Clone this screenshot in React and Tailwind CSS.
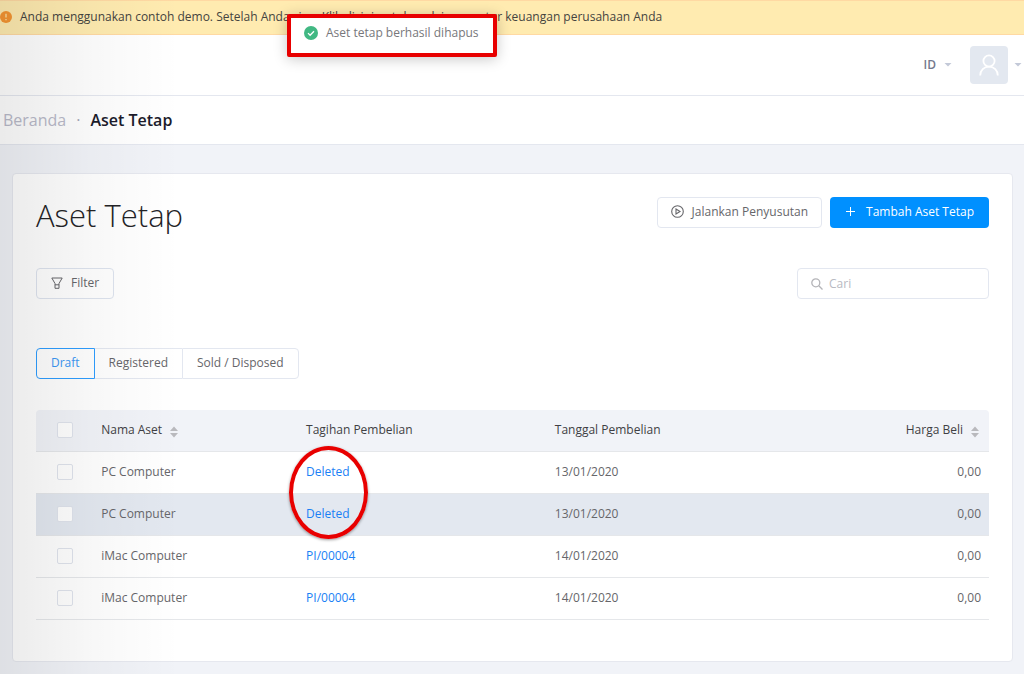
import React from 'react'

const assets = [
  { id: 1, name: 'PC Computer', bill: 'Deleted', date: '13/01/2020', price: '0,00' },
  { id: 2, name: 'PC Computer', bill: 'Deleted', date: '13/01/2020', price: '0,00', active: true },
  { id: 3, name: 'iMac Computer', bill: 'PI/00004', date: '14/01/2020', price: '0,00' },
  { id: 4, name: 'iMac Computer', bill: 'PI/00004', date: '14/01/2020', price: '0,00' },
]

const Caret = () => (
  <svg className="w-2 h-1" viewBox="0 0 8 4" fill="#c3c9d8" aria-hidden="true">
    <path d="M0.5 0h7L4 3.5z" />
  </svg>
)

const SortIcon = () => (
  <svg className="w-2 h-3 shrink-0 mt-1" viewBox="0 0 8 12" fill="#b9b9bd" aria-hidden="true">
    <path d="M4 0.5l4 4.5H0zM4 11.5L0 7h8z" />
  </svg>
)

const Checkbox = ({ label }) => (
  <input
    type="checkbox"
    aria-label={label}
    className="block mx-auto w-4 h-4 appearance-none rounded-xs border border-[#dfe3ec] bg-white checked:bg-[#0090ff]"
  />
)

const DemoBanner = () => (
  <div className="h-[35px] flex items-center gap-2 border-y border-[#ffd9a3] bg-[#ffebb0] pb-px text-[#45443f] whitespace-nowrap overflow-hidden">
    <svg className="w-3 h-3 shrink-0" viewBox="0 0 12 12" aria-hidden="true">
      <circle cx="6" cy="6" r="6" fill="#f59532" />
      <path d="M6 2.8v3.8M6 8v1.2" stroke="#ffebb0" strokeWidth="1.2" />
    </svg>
    <p>Anda menggunakan contoh demo. Setelah Anda siap, Klik disini untuk mulai mengatur keuangan perusahaan Anda</p>
  </div>
)

const Toast = () => (
  <div
    role="status"
    className="absolute top-[14px] left-[287px] w-[210px] h-[43px] flex items-start gap-2 rounded-xs border-4 border-[#e80000] bg-white pl-[13px] pt-[5px] text-[#77777b] whitespace-nowrap shadow-[0_2px_14px_rgba(0,0,0,0.22)]"
  >
    <svg className="w-[14px] h-[14px] mt-[3px] shrink-0" viewBox="0 0 14 14" aria-hidden="true">
      <circle cx="7" cy="7" r="7" fill="#41b883" />
      <path d="M4 7.1l2.1 2.1L10 5.2" fill="none" stroke="#fff" strokeWidth="1.3" />
    </svg>
    <span>Aset tetap berhasil dihapus</span>
  </div>
)

const Topbar = () => (
  <header className="h-[61px] flex items-center justify-end border-b border-[#e4e7ef] bg-white pr-[2px]">
    <button className="flex items-center gap-2 font-semibold text-[#74788d]">
      ID
      <Caret />
    </button>
    <button aria-label="Akun" className="ml-[18px] flex items-center gap-[6px]">
      <span className="w-[38px] h-[38px] flex items-center justify-center rounded-sm bg-[#e3e8f0]">
        <svg className="w-5 h-[22px]" viewBox="0 0 20 22" fill="none" stroke="#fff" strokeWidth="1.8" aria-hidden="true">
          <circle cx="10" cy="7" r="5.6" />
          <path d="M1.2 21.5c0-5 3.8-8.8 8.8-8.8s8.8 3.8 8.8 8.8" />
        </svg>
      </span>
      <Caret />
    </button>
  </header>
)

const Breadcrumb = () => (
  <nav className="h-[49px] flex items-center gap-[10px] border-b border-[#e4e7ef] bg-white pl-[3px] text-[16px]">
    <a href="#beranda" className="text-[#b9bac9]">Beranda</a>
    <span className="text-[#a5a7b8]">·</span>
    <span className="font-semibold text-[#1b1b2b]">Aset Tetap</span>
  </nav>
)

const Toolbar = () => (
  <>
    <div className="flex items-start justify-between">
      <h1 className="text-[31px] leading-[36px] font-light text-[#232326]">Aset Tetap</h1>
      <div className="flex gap-2">
        <button className="h-[31px] flex items-center gap-2 rounded-sm border border-[#e3e7f0] bg-white px-[13px] pb-[2px]">
          <svg className="w-[13px] h-[13px]" viewBox="0 0 13 13" fill="none" stroke="#66666a" strokeWidth="1.1" aria-hidden="true">
            <circle cx="6.5" cy="6.5" r="5.8" />
            <path d="M5 4l4 2.5L5 9z" />
          </svg>
          Jalankan Penyusutan
        </button>
        <button className="h-[31px] flex items-center gap-[10px] rounded-sm bg-[#0090ff] px-[15px] pb-[2px] text-white">
          <svg className="w-[11px] h-[11px]" viewBox="0 0 11 11" stroke="#fff" aria-hidden="true">
            <path d="M5.5 1v9M1 5.5h9" />
          </svg>
          Tambah Aset Tetap
        </button>
      </div>
    </div>
    <div className="mt-[35px] flex items-center justify-between">
      <button className="h-[31px] flex items-center gap-2 rounded-sm border border-[#dde3ee] bg-white px-[14px] pb-px">
        <svg className="w-3 h-3" viewBox="0 0 12 12" fill="none" stroke="#66666a" aria-hidden="true">
          <path d="M0.8 1h10.4L8 6.5v4.8H4V6.5zM4 7.8h4" />
        </svg>
        Filter
      </button>
      <label className="h-[31px] w-[192px] flex items-center gap-[6px] rounded-sm border border-[#e3e7f0] bg-white px-[13px]">
        <svg className="w-3 h-3 shrink-0" viewBox="0 0 12 12" fill="none" stroke="#b4b4b8" strokeWidth="1.3" aria-hidden="true">
          <circle cx="4.8" cy="4.8" r="4" />
          <path d="M7.8 7.8l3.7 3.7" />
        </svg>
        <input type="text" aria-label="Cari" placeholder="Cari" className="w-full min-w-0 outline-none placeholder:text-[#b8bac2]" />
      </label>
    </div>
  </>
)

const StatusTabs = () => (
  <div className="mt-[49px] flex h-[31px]">
    <button className="rounded-l-sm border border-[#2e9dff] px-[14px] pb-px text-[#3b97f5]">Draft</button>
    <button className="border-y border-[#e3e7f0] px-[14px] pb-px">Registered</button>
    <button className="rounded-r-sm border border-[#e3e7f0] px-[14px] pb-px">Sold / Disposed</button>
  </div>
)

const AssetTable = () => (
  <table className="mt-[31px] w-full table-fixed border-separate border-spacing-0 text-left">
    <colgroup>
      <col className="w-[6%]" />
      <col className="w-[21.5%]" />
      <col className="w-[26.1%]" />
      <col className="w-[24%]" />
      <col />
    </colgroup>
    <thead className="bg-[#f1f3f8] text-[#3f3f44]">
      <tr className="h-[42px]">
        <th className="rounded-tl-sm border-b border-[#e5e7ea] px-2 pb-px"><Checkbox label="Pilih semua" /></th>
        <th className="border-b border-[#e5e7ea] px-2 pb-px font-normal">
          <span className="flex items-center gap-2">Nama Aset <SortIcon /></span>
        </th>
        <th className="border-b border-[#e5e7ea] px-2 pb-px font-normal">Tagihan Pembelian</th>
        <th className="border-b border-[#e5e7ea] px-2 pb-px font-normal">Tanggal Pembelian</th>
        <th className="rounded-tr-sm border-b border-[#e5e7ea] px-2 pb-px font-normal">
          <span className="flex items-center justify-end gap-2 pr-[2px]">Harga Beli <SortIcon /></span>
        </th>
      </tr>
    </thead>
    <tbody>
      {assets.map((asset) => (
        <tr key={asset.id} className={asset.active ? 'h-[42px] bg-[#e3e8f0]' : 'h-[42px]'}>
          <td className="border-b border-[#e5e7ea] px-2 pb-px"><Checkbox label={`Pilih ${asset.name}`} /></td>
          <td className="border-b border-[#e5e7ea] px-2 pb-px">{asset.name}</td>
          <td className="border-b border-[#e5e7ea] px-2 pb-px">
            <a href="#tagihan" className="text-[#1a80f5]">{asset.bill}</a>
          </td>
          <td className="border-b border-[#e5e7ea] px-2 pb-px">{asset.date}</td>
          <td className="border-b border-[#e5e7ea] px-2 pb-px text-right">{asset.price}</td>
        </tr>
      ))}
    </tbody>
  </table>
)

const App = () => {
  return (
    <div className="relative min-h-screen overflow-hidden bg-[#f1f3f8] font-['Open_Sans','Liberation_Sans',sans-serif] text-[12px] leading-5 text-[#66666a]">
      <DemoBanner />
      <Topbar />
      <Breadcrumb />
      <main className="mt-[28px] ml-3 mr-[11px] mb-[13px] rounded-sm border border-[#e6e8ef] bg-white px-[23px] pt-[23px] pb-[41px]">
        <Toolbar />
        <StatusTabs />
        <AssetTable />
      </main>
      <Toast />
      {/* ring around the deleted purchase bills */}
      <div className="pointer-events-none absolute top-[446px] left-[289px] w-[79px] h-[93px] rounded-[50%] border-4 border-[#e80000] shadow-[0_1px_3px_rgba(0,0,0,0.4)]"></div>
      <div className="pointer-events-none absolute inset-y-0 left-0 w-[180px] bg-linear-to-r from-black/8 via-black/3 to-transparent"></div>
    </div>
  )
}

export default App
